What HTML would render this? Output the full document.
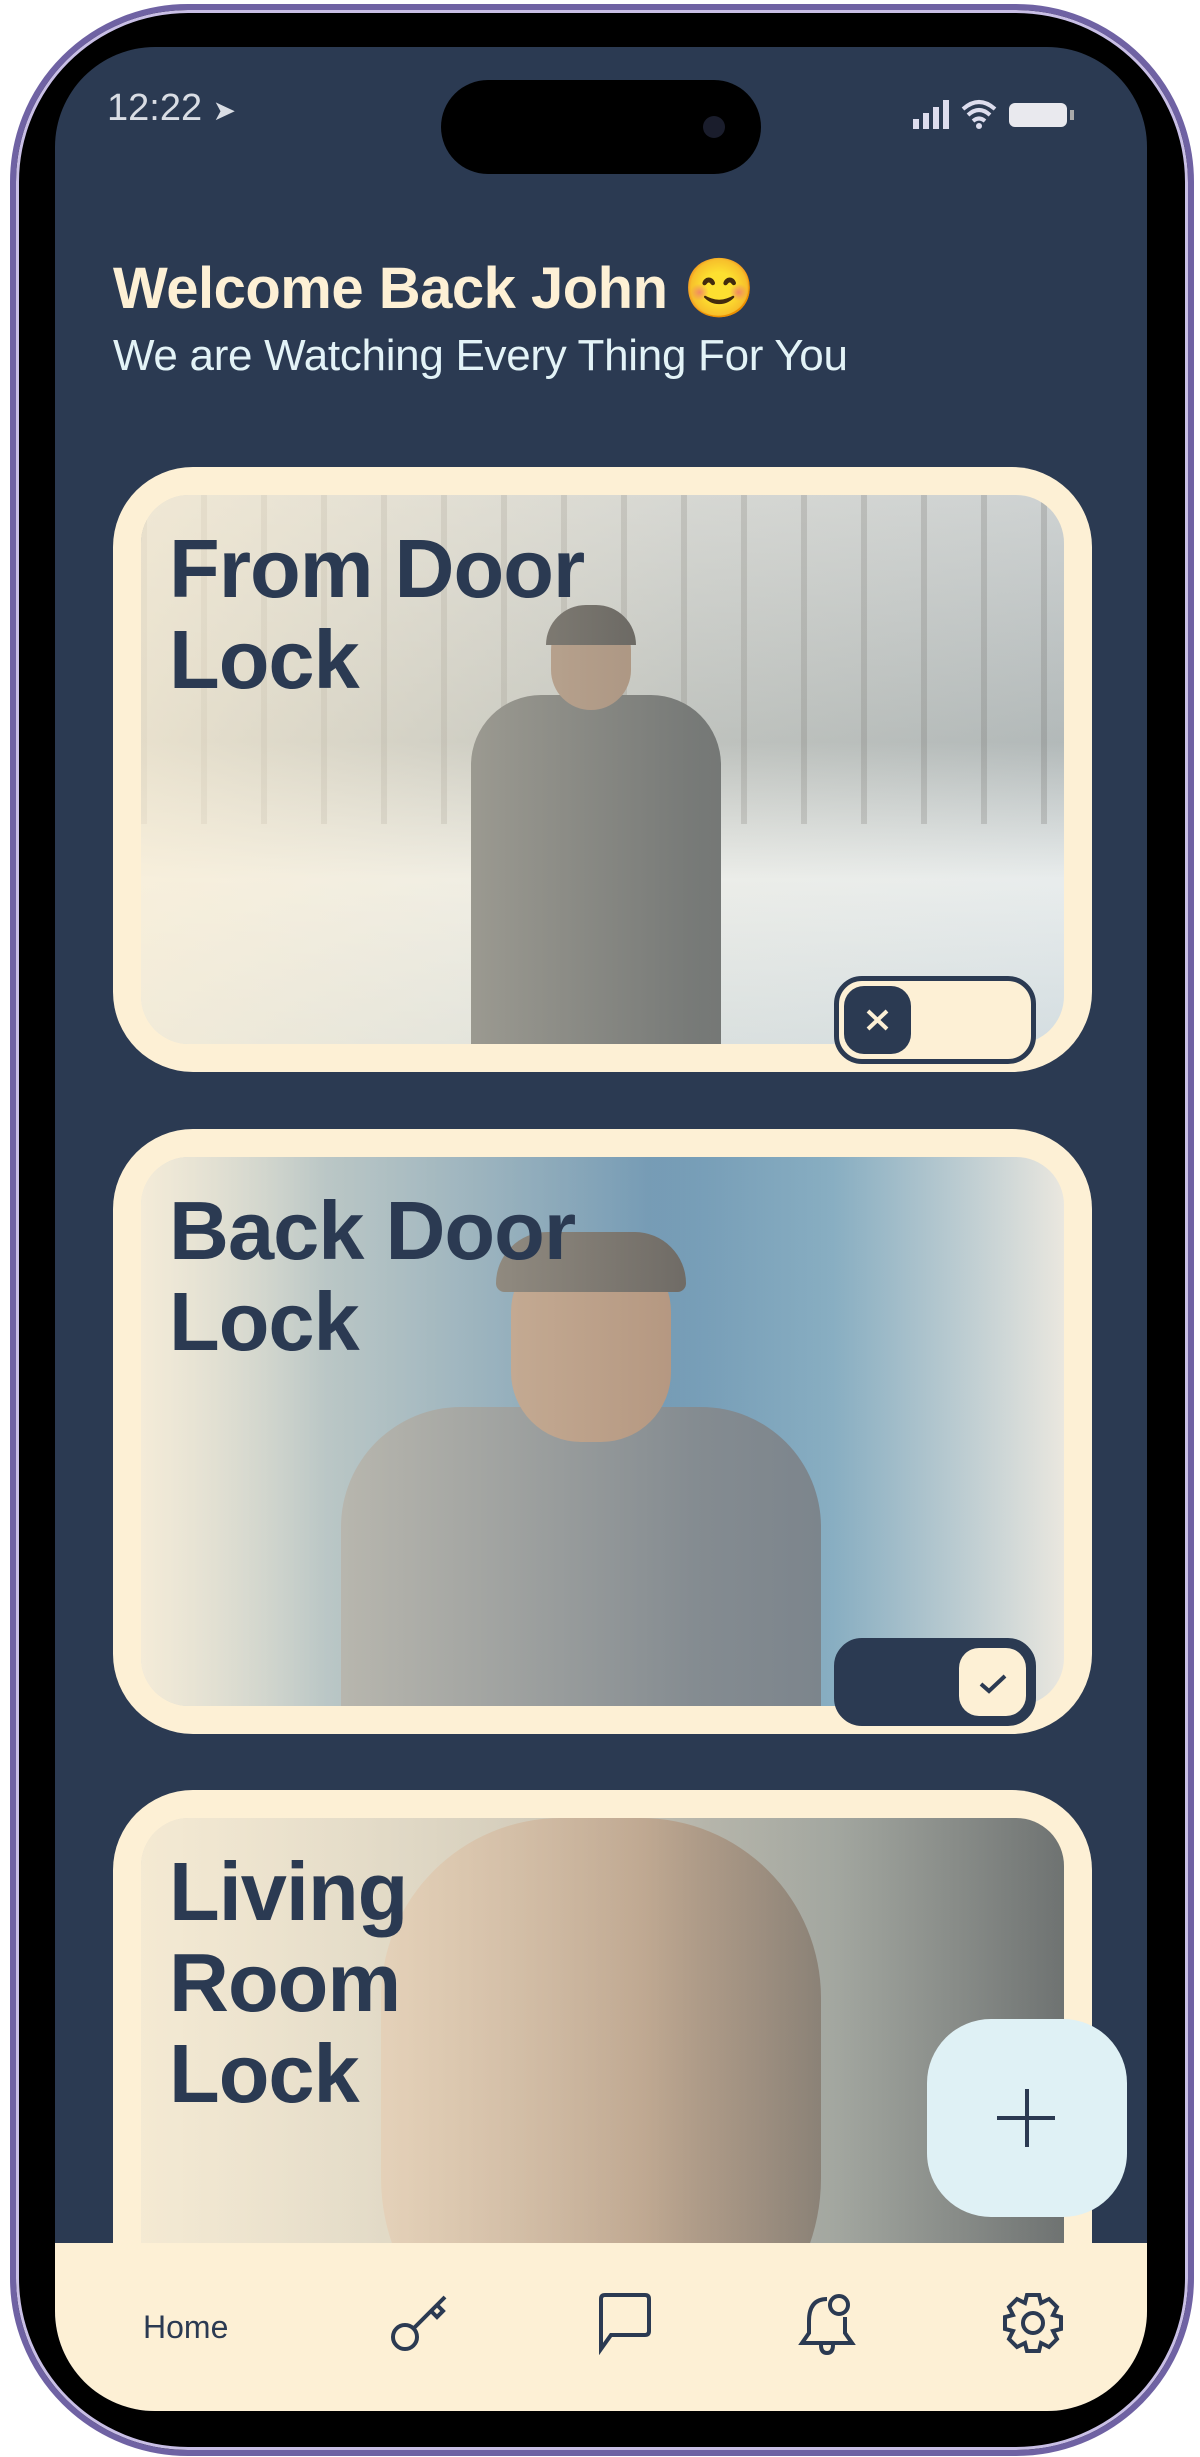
<!DOCTYPE html>
<html><head><meta charset="utf-8"><style>
*{margin:0;padding:0;box-sizing:border-box}
html,body{width:1200px;height:2457px;background:#fff;overflow:hidden;font-family:"Liberation Sans",Roboto,sans-serif}
.frame{position:absolute;left:10px;top:4px;width:1184px;height:2452px;border-radius:178px;background:#000;border:6px solid #6f62a3;box-shadow:inset 0 0 0 3px #c9bfe6}
.screen{position:absolute;left:55px;top:47px;width:1092px;height:2364px;border-radius:100px;background:#2b3a52;overflow:hidden}
.island{position:absolute;left:386px;top:33px;width:320px;height:94px;border-radius:47px;background:#000}
.cam{position:absolute;left:262px;top:36px;width:22px;height:22px;border-radius:50%;background:#1a1d2c}
.time{position:absolute;left:52px;top:40px;color:#d9dde4;font-size:38px}
.h1{position:absolute;left:58px;top:208px;color:#fdf0d5;font-size:58px;font-weight:bold;letter-spacing:-0.5px}
.sub{position:absolute;left:58px;top:284px;color:#e3f3f7;font-size:44px;letter-spacing:-0.3px}
.card{position:absolute;left:58px;width:979px;height:605px;border-radius:80px;background:#fdf0d5}
.img{position:absolute;left:28px;top:28px;width:923px;height:549px;border-radius:48px;overflow:hidden}
.ov{position:absolute;inset:0;background:linear-gradient(90deg,rgba(253,240,213,.75),rgba(253,240,213,.25) 60%,rgba(253,240,213,.1))}
.title{position:absolute;left:28px;top:28px;color:#2b3a52;font-size:83px;font-weight:bold;line-height:91px;letter-spacing:-1px}
.tog{position:absolute;left:721px;width:202px;height:88px;border-radius:28px;border:5px solid #2b3a52}
.knob{position:absolute;top:5px;width:67px;height:68px;border-radius:20px}
.fab{position:absolute;left:872px;top:1972px;width:200px;height:198px;border-radius:64px;background:#dff1f5}
.nav{position:absolute;left:0;top:2196px;width:1092px;height:168px;background:#fdf0d5}
.home{position:absolute;left:88px;top:66px;color:#2b3a52;font-size:32px}
.ic{position:absolute;top:48px}
</style></head><body>
<div class="frame"></div>
<div class="screen">
 <div class="island"><div class="cam"></div></div>
 <div class="time">12:22 <span style="font-size:28px">➤</span></div>
 <svg style="position:absolute;left:856px;top:50px" width="180" height="34" viewBox="0 0 180 34">
  <rect x="2" y="22" width="6" height="10" fill="#dde" /><rect x="12" y="16" width="6" height="16" fill="#dde"/><rect x="22" y="10" width="6" height="22" fill="#dde"/><rect x="32" y="3" width="6" height="29" fill="#dde"/>
  <path d="M52 12 Q68 -2 84 12 M57 18 Q68 8 79 18 M62 24 Q68 19 74 24" stroke="#dde" stroke-width="4" fill="none"/><circle cx="68" cy="29" r="3" fill="#dde"/>
  <rect x="98" y="6" width="58" height="24" rx="6" fill="#e9e9ee"/><rect x="159" y="13" width="4" height="10" fill="#aaa"/>
 </svg>
 <div class="h1">Welcome Back John <span style="font-family:'Noto Color Emoji',sans-serif">😊</span></div>
 <div class="sub">We are Watching Every Thing For You</div>

 <div class="card" style="top:420px">
  <div class="img" style="background:linear-gradient(180deg,#c9cfd2 0%,#aab3b6 45%,#e6ecef 70%,#cfdbe2 100%)">
   <div style="position:absolute;left:0;top:0;width:100%;height:60%;background:repeating-linear-gradient(90deg,rgba(90,90,90,.25) 0 6px,transparent 6px 60px)"></div>
   <div style="position:absolute;left:330px;top:200px;width:250px;height:360px;border-radius:70px 70px 0 0;background:#4a5258"></div>
   <div style="position:absolute;left:410px;top:115px;width:80px;height:100px;border-radius:40px;background:#8a7060"></div>
   <div style="position:absolute;left:405px;top:110px;width:90px;height:40px;border-radius:45px 45px 0 0;background:#2d2f33"></div>
   <div class="ov"></div>
   <div class="title">From Door<br>Lock</div>
  </div>
  <div class="tog" style="top:509px;background:#fdf0d5"><div class="knob" style="left:5px;background:#2b3a52"><svg width="67" height="68"><path d="M24 25L43 43M43 25L24 43" stroke="#fdf0d5" stroke-width="4"/></svg></div></div>
 </div>

 <div class="card" style="top:1082px">
  <div class="img" style="background:linear-gradient(90deg,#d8dde0 0%,#5d8db0 20%,#3f79a8 55%,#6c9ebd 75%,#e8e6e0 100%)">
   <div style="position:absolute;left:200px;top:250px;width:480px;height:320px;border-radius:120px 120px 0 0;background:#5c6a7a"></div>
   <div style="position:absolute;left:370px;top:85px;width:160px;height:200px;border-radius:70px;background:#9a7762"></div>
   <div style="position:absolute;left:355px;top:75px;width:190px;height:60px;border-radius:60px 60px 10px 10px;background:#3e3d3f"></div>
   <div class="ov"></div>
   <div class="title">Back Door<br>Lock</div>
  </div>
  <div class="tog" style="top:509px;background:#2b3a52"><div class="knob" style="right:5px;background:#fdf0d5"><svg width="67" height="68"><path d="M22 36L30 43L46 28" stroke="#2b3a52" stroke-width="4" fill="none"/></svg></div></div>
 </div>

 <div class="card" style="top:1743px">
  <div class="img" style="background:linear-gradient(90deg,#d9d6cc 0%,#b9b6ab 40%,#8d9593 75%,#5e6466 100%)">
   <div style="position:absolute;left:240px;top:0;width:440px;height:560px;border-radius:180px 180px 200px 200px;background:linear-gradient(90deg,#c8ae98,#a58a75 60%,#6e665f)"></div>
   <div class="ov"></div>
   <div class="title">Living<br>Room<br>Lock</div>
  </div>
 </div>

 <div class="fab"><svg width="200" height="198"><path d="M100 70V128M70 99H128" stroke="#2b3a52" stroke-width="4"/></svg></div>

 <div class="nav">
  <div class="home">Home</div>
  <svg class="ic" style="left:334px" width="66" height="64" viewBox="0 0 66 64" fill="none" stroke="#2b3a52" stroke-width="4"><circle cx="16" cy="46" r="12"/><path d="M25 37L56 6M42 20L48 26L54 20L48 14"/></svg>
  <svg class="ic" style="left:540px" width="60" height="64" viewBox="0 0 60 64" fill="none" stroke="#2b3a52" stroke-width="4"><path d="M6 58V8Q6 4 10 4H50Q54 4 54 8V40Q54 44 50 44H16Z"/></svg>
  <svg class="ic" style="left:742px" width="60" height="66" viewBox="0 0 60 66" fill="none" stroke="#2b3a52" stroke-width="4"><path d="M30 8Q12 8 12 30V42L5 52H55L48 42V26"/><circle cx="42" cy="14" r="9"/><path d="M24 54Q24 62 30 62Q36 62 36 54"/></svg>
  <svg class="ic" style="left:946px" width="64" height="64" viewBox="0 0 64 64" fill="none" stroke="#2b3a52" stroke-width="4"><circle cx="32" cy="32" r="10"/><path d="M26 4H38L40 12L48 8L56 16L52 24L60 26V38L52 40L56 48L48 56L40 52L38 60H26L24 52L16 56L8 48L12 40L4 38V26L12 24L8 16L16 8L24 12Z"/></svg>
 </div>
</div>
</body></html>
